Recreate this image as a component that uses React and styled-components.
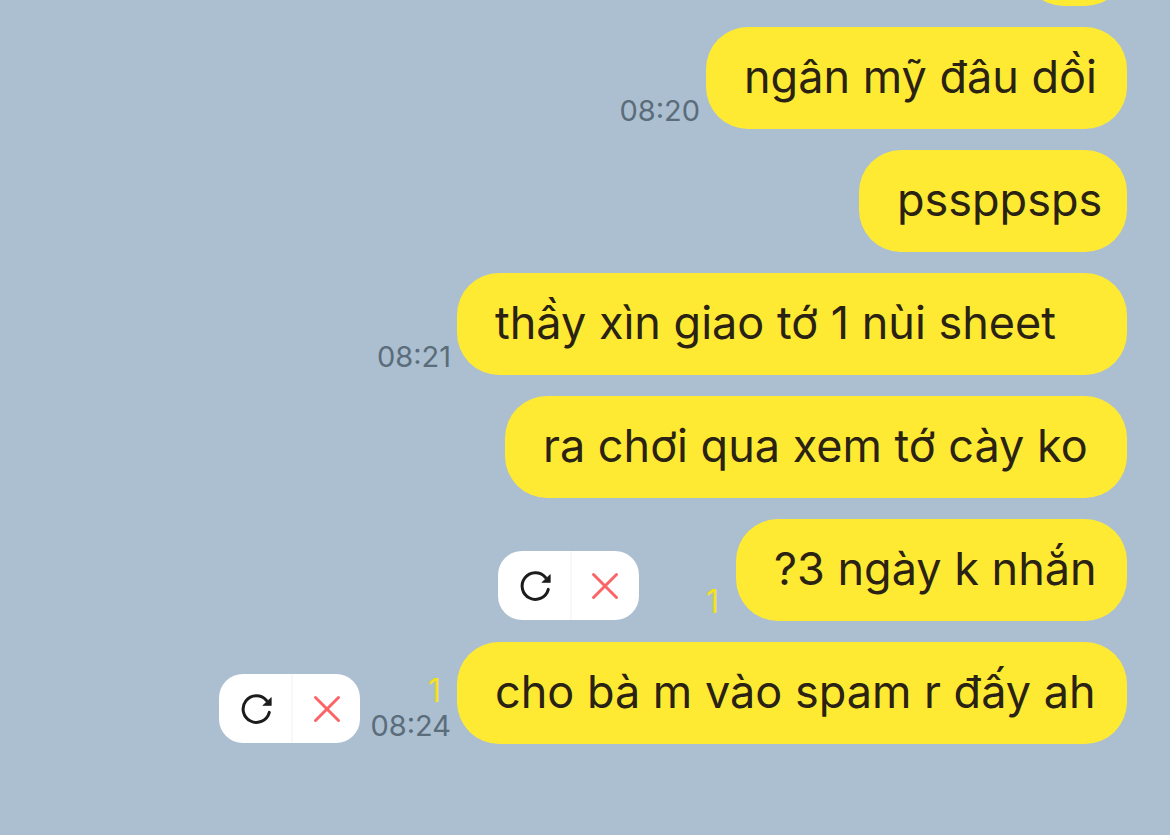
import React from "react";
import styled, { createGlobalStyle } from "styled-components";

const GlobalStyle = createGlobalStyle`
  * { box-sizing: border-box; }
  body {
    margin: 0;
    overflow: hidden;
    background: #abbfd1;
    font-family: Inter, "Liberation Sans", Arial, sans-serif;
  }
`;

const Chat = styled.main`
  height: 100vh;
  display: flex;
  flex-direction: column;
  justify-content: flex-end;
  gap: 21px;
  padding: 0 43px 91px;
`;

const Row = styled.article`
  flex: none;
  display: flex;
  justify-content: flex-end;
  align-items: flex-end;
`;

const Bubble = styled.p`
  margin: 0;
  flex: none;
  height: 102px;
  min-width: ${({ $minWidth }) => $minWidth}px;
  padding: 22px 24px 0 38px;
  border-radius: 42px;
  background: #ffea33;
  color: #2a2313;
  font-size: 45px;
  line-height: 56px;
  white-space: pre;
`;

const Meta = styled.div`
  display: flex;
  flex-direction: column;
  align-items: flex-end;
  padding: 0 ${({ $wide }) => ($wide ? 17 : 6)}px 1px 0;
`;

const Unread = styled.span`
  padding-right: ${({ $inset }) => ($inset ? 10 : 0)}px;
  color: #f5e11c;
  font-size: 32px;
  line-height: 36px;
`;

const Time = styled.time`
  color: #5b6c7a;
  font-size: 29px;
  line-height: 34px;
`;

const Actions = styled.div`
  display: flex;
  width: 141px;
  height: 69px;
  margin: 0 ${({ $far }) => ($far ? 67 : 10)}px 1px 0;
  border-radius: 24px;
  background: #fff;
  overflow: hidden;
`;

const Action = styled.button`
  flex: 1;
  display: flex;
  align-items: center;
  justify-content: center;
  padding: 0;
  border: 0;
  background: none;
  & + & {
    flex: none;
    width: 69px;
    border-left: 2px solid #f8f8f8;
  }
`;

const RetryIcon = () => (
  <svg width="34" height="34" viewBox="0 0 34 34" fill="none" aria-hidden="true">
    <path d="M31.3 20.4A13.3 13.3 0 1 1 28.5 8.4" stroke="#1c1c1c" strokeWidth="3" strokeLinecap="round" />
    <path d="M33.3 5.5v8h-8.5z" fill="#1c1c1c" stroke="#1c1c1c" strokeWidth="0.6" strokeLinejoin="round" />
  </svg>
);

const CancelIcon = () => (
  <svg width="28" height="28" viewBox="0 0 28 28" fill="none" aria-hidden="true">
    <path d="M2.5 2.5l23 23M25.5 2.5l-23 23" stroke="#fb6466" strokeWidth="3" strokeLinecap="round" />
  </svg>
);

const messages = [
  { text: "", minWidth: 105 },
  { text: "ngân mỹ đâu dồi", minWidth: 421, time: "08:20" },
  { text: "pssppsps", minWidth: 268 },
  { text: "thầy xìn giao tớ 1 nùi sheet ", minWidth: 670, time: "08:21" },
  { text: "ra chơi qua xem tớ cày ko", minWidth: 622 },
  { text: "?3 ngày k nhắn", minWidth: 391, unread: 1 },
  { text: "cho bà m vào spam r đấy ah", minWidth: 670, unread: 1, time: "08:24" },
];

function Message({ text, minWidth, time, unread }) {
  return (
    <Row>
      {unread && (
        <Actions $far={!time}>
          <Action type="button" aria-label="Gửi lại"><RetryIcon /></Action>
          <Action type="button" aria-label="Hủy"><CancelIcon /></Action>
        </Actions>
      )}
      {(time || unread) && (
        <Meta $wide={!time}>
          {unread && <Unread $inset={Boolean(time)}>{unread}</Unread>}
          {time && <Time>{time}</Time>}
        </Meta>
      )}
      <Bubble $minWidth={minWidth}>{text}</Bubble>
    </Row>
  );
}

export default function App() {
  return (
    <>
      <GlobalStyle />
      <Chat>
        {messages.map((m, i) => <Message key={i} {...m} />)}
      </Chat>
    </>
  );
}
